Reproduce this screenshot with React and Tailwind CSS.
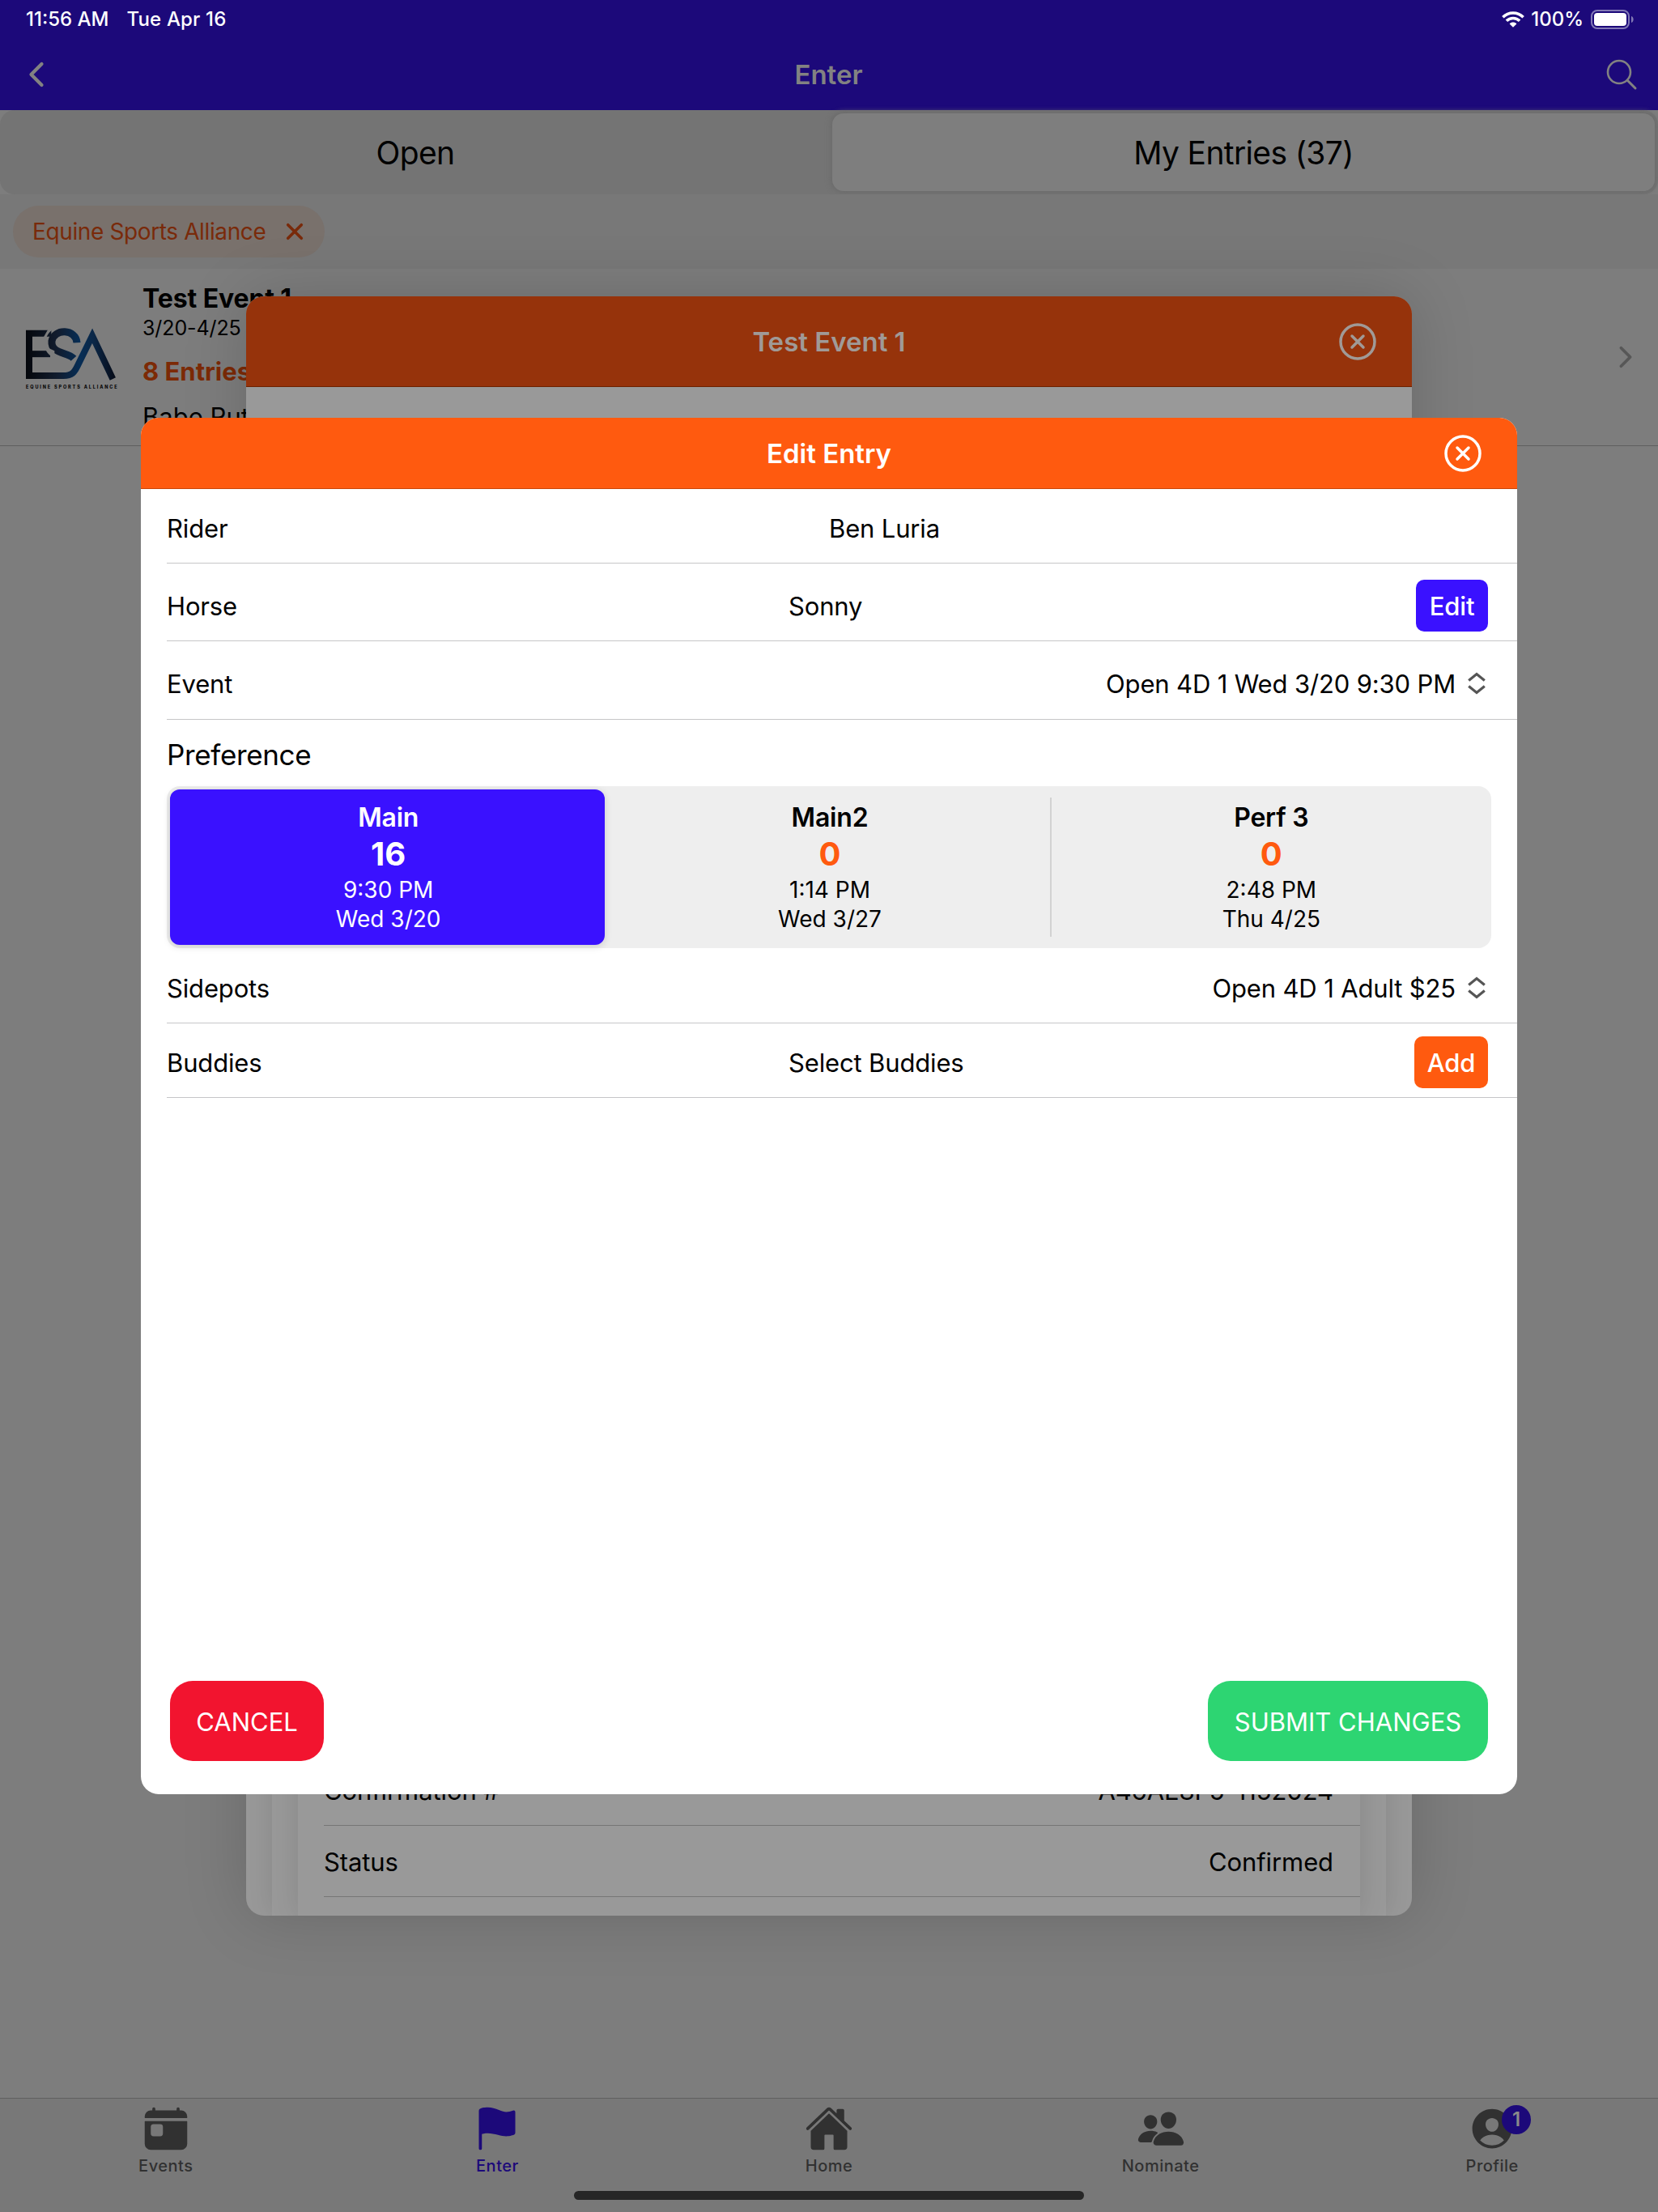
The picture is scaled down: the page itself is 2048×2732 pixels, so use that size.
import React from "react";
import {
  IoChevronBack,
  IoChevronForward,
  IoClose,
  IoCloseCircleOutline,
  IoFlag,
  IoHome,
  IoPeople,
  IoPersonCircle,
  IoToday,
} from "react-icons/io5";

const tabs = [
  { name: "Events", icon: IoToday },
  { name: "Enter", icon: IoFlag, active: true },
  { name: "Home", icon: IoHome },
  { name: "Nominate", icon: IoPeople },
  { name: "Profile", icon: IoPersonCircle, badge: 1 },
];

const performances = [
  { name: "Main", count: 16, time: "9:30 PM", date: "Wed 3/20", selected: true },
  { name: "Main2", count: 0, time: "1:14 PM", date: "Wed 3/27" },
  { name: "Perf 3", count: 0, time: "2:48 PM", date: "Thu 4/25", divider: true },
];

function StatusBar() {
  return (
    <div className="flex h-[48px] items-center justify-between pl-[32px] pr-[29px] text-[24px] font-medium leading-none text-white">
      <div className="flex gap-[22px]">
        <span>11:56 AM</span>
        <span className="tracking-[0.15px]">Tue Apr 16</span>
      </div>
      <div className="flex items-center">
        <svg width="28" height="20" viewBox="0 0 28 20" className="mr-[8px]">
          <g fill="none" stroke="white" strokeWidth="3.6">
            <path d="M1.4 7.2C8.4 0.2 19.6 0.2 26.6 7.2" />
            <path d="M5.9 11.8C10.4 7.4 17.6 7.4 22.1 11.8" />
          </g>
          <path d="M14 19.8L9.6 15.4C12 13 16 13 18.4 15.4Z" fill="white" />
        </svg>
        <span>100%</span>
        <svg width="54" height="24" viewBox="0 0 54 24" className="ml-[9px]">
          <rect x="1" y="1" width="46" height="22" rx="7" fill="none" stroke="#8279b5" strokeWidth="2" />
          <rect x="4" y="4" width="40" height="16" rx="4" fill="white" />
          <path d="M50 8C53.5 9 53.5 15 50 16Z" fill="#8279b5" />
        </svg>
      </div>
    </div>
  );
}

function Header() {
  return (
    <header className="h-[136px] bg-[#1c097a]">
      <StatusBar />
      <div className="flex h-[88px] items-center justify-between pl-[22px] pr-[25px] text-[#828282]">
        <IoChevronBack size={46} />
        <h1 className="-ml-[4px] text-[33px] font-semibold leading-none">Enter</h1>
        <svg width="40" height="40" viewBox="0 0 40 40" fill="none" stroke="currentColor" strokeLinecap="round">
          <circle cx="17" cy="17" r="14" strokeWidth="2.6" />
          <path d="M27.5 27.5L37 37" strokeWidth="3" />
        </svg>
      </div>
    </header>
  );
}

function Logo() {
  return (
    <svg width="150" height="120" viewBox="0 0 450 360">
      <defs>
        <linearGradient id="esa" gradientUnits="userSpaceOnUse" x1="66" y1="0" x2="400" y2="0">
          <stop offset="0" stopColor="#05070c" />
          <stop offset="0.35" stopColor="#111c2e" />
          <stop offset="0.6" stopColor="#062d55" />
          <stop offset="0.75" stopColor="#0b2747" />
          <stop offset="1" stopColor="#060a16" />
        </linearGradient>
      </defs>
      <g fill="none" stroke="url(#esa)" strokeWidth="24">
        <path d="M160 95H78V252H205C238 252 246 238 256 218L312 104L388 264" strokeMiterlimit="6" />
        <path d="M90 171.5H156" />
        <path d="M255 130C252 78 170 76 162 124C158 172 222 164 243 188" strokeWidth="27" />
      </g>
      <path d="M148 80L166 80C150 92 143 106 142 112L130 112Z" fill="#7d7d7d" />
      <path d="M140 158C148 172 158 180 172 186L172 160L150 150Z" fill="#7d7d7d" />
      <text
        x="66"
        y="301"
        textLength="338"
        fontFamily="Inter, sans-serif"
        fontSize="16.5"
        fontWeight="800"
        fill="#0a0a0a"
      >
        EQUINE SPORTS ALLIANCE
      </text>
    </svg>
  );
}

function EventsPage() {
  return (
    <main className="flex flex-1 flex-col bg-[#7d7d7d]">
      <div className="flex h-[104px] rounded-[18px] bg-[#747474] text-[39px] leading-none tracking-[-0.65px]">
        <div className="flex flex-1 items-center justify-center pr-[2px]">Open</div>
        <div className="my-[4px] mr-[4px] flex w-[1016px] items-center justify-center rounded-[14px] bg-[#7e7e7e] shadow-[0_0_6px_2px_#6b6b6b]">
          My Entries (37)
        </div>
      </div>

      <div className="flex h-[92px] items-center bg-[#787878] px-[16px]">
        <div className="flex h-[64px] w-[385px] items-center rounded-full bg-[#79716c] pl-[24px] leading-none text-[#792a0a]">
          <span className="text-[28px] tracking-[-0.38px]">Equine Sports Alliance</span>
          <IoClose size={38} className="ml-[17px]" />
        </div>
      </div>

      <div className="flex h-[219px] items-start border-b border-[#5f5f5f] pt-[16px]">
        <div className="pl-[10px] pt-[32px]">
          <Logo />
        </div>
        <div className="flex-1 pl-[16px] leading-none">
          <p className="pt-px text-[32px] font-bold leading-[40px] tracking-[-0.1px]">Test Event 1</p>
          <p className="text-[25px] leading-[33px] tracking-[-0.1px]">3/20-4/25</p>
          <p className="mt-[17px] text-[31px] font-bold leading-[40px] text-[#7c2a06]">8 Entries</p>
          <p className="mt-[16px] text-[31px] leading-[40px]">Babe Ruth</p>
        </div>
        <IoChevronForward size={40} className="mr-[20px] mt-[73px] text-[#575757]" />
      </div>
    </main>
  );
}

function TabBar() {
  return (
    <nav className="h-[141px] border-t border-[#606060] bg-[#787878]">
      <div className="flex">
        {tabs.map(({ name, icon: Icon, active, badge }) => (
          <div
            key={name}
            className={`flex flex-1 flex-col items-center pt-[7px] ${active ? "text-[#1c097a]" : "text-[#313131]"}`}
          >
            <div className="relative">
              <Icon size={60} />
              {badge && (
                <span className="absolute -right-[18px] top-[1px] flex h-[36px] w-[36px] items-center justify-center rounded-full bg-[#1c097a] text-[24px] font-semibold leading-none text-[#8a8a8a]">
                  {badge}
                </span>
              )}
            </div>
            <span className="mt-[4px] text-[20px] font-medium leading-[24px] tracking-[0.5px]">{name}</span>
          </div>
        ))}
      </div>
      <div className="mx-auto mt-[19px] h-[11px] w-[630px] rounded-full bg-[#262626]" />
    </nav>
  );
}

function DetailRow({ label, value }) {
  return (
    <div className="ml-[32px] flex h-[88px] items-center justify-between border-b border-[#767676] pr-[33px] pt-[2px]">
      <span>{label}</span>
      <span>{value}</span>
    </div>
  );
}

function EventModal() {
  return (
    <section className="absolute left-[304px] top-[366px] flex h-[2000px] w-[1440px] flex-col overflow-hidden rounded-[22px] bg-[#999999] shadow-[0_0_80px_rgba(0,0,0,0.16)]">
      <div className="relative flex h-[112px] items-center justify-center border-b border-[#6d2200] bg-[#96330b] text-[#a09a97]">
        <h2 className="pt-[2px] text-[33px] font-semibold leading-none">Test Event 1</h2>
        <IoCloseCircleOutline size={56} className="absolute right-[39px]" />
      </div>
      {/* stacked cards: only their edges and the last rows of the front one show */}
      <div className="flex flex-1 px-[32px] pt-[120px]">
        <div className="flex flex-1 px-[32px] shadow-[0_0_34px_rgba(0,0,0,0.12)]">
          <div className="flex flex-1 flex-col justify-end bg-[#999999] pb-[23px] text-[31px] leading-none tracking-[-0.1px] shadow-[0_0_34px_rgba(0,0,0,0.12)]">
            <DetailRow label="Confirmation #" value="A46AE8F5-1152024" />
            <DetailRow label="Status" value="Confirmed" />
          </div>
        </div>
      </div>
    </section>
  );
}

function UpDown() {
  return (
    <svg
      width="22"
      height="28"
      viewBox="0 0 22 28"
      fill="none"
      stroke="#555555"
      strokeWidth="3.2"
      className="mr-[3px]"
    >
      <path d="M1.2 10.6L11 2.6L20.8 10.6" />
      <path d="M1.2 17.4L11 25.4L20.8 17.4" />
    </svg>
  );
}

function Row({ label, className = "", children }) {
  return (
    <div className={`ml-[32px] flex items-center border-b border-[#c6c6c8] pr-[36px] ${className}`}>
      <span className="w-[768px] shrink-0">{label}</span>
      {children}
    </div>
  );
}

function EditEntryModal() {
  return (
    <section className="absolute left-[174px] top-[516px] flex h-[1700px] w-[1700px] flex-col overflow-hidden rounded-[22px] bg-white">
      <div className="relative flex h-[88px] items-center justify-center border-b border-[#c9470c] bg-[#ff5a0f] text-white">
        <h2 className="pt-px text-[33px] font-semibold leading-none">Edit Entry</h2>
        <IoCloseCircleOutline size={56} className="absolute right-[39px]" />
      </div>

      <div className="text-[31px] leading-none tracking-[-0.15px]">
        <Row label="Rider" className="h-[92px] pt-[6px]">
          <span className="ml-[50px]">Ben Luria</span>
        </Row>
        <Row label="Horse" className="h-[96px] pt-[9px]">
          <span>Sonny</span>
          <button className="ml-auto h-[64px] w-[89px] rounded-[10px] bg-[#3a11ff] font-medium text-white">Edit</button>
        </Row>
        <Row label="Event" className="h-[97px] pt-[8px]">
          <span className="ml-auto mr-[15px]">Open 4D 1 Wed 3/20 9:30 PM</span>
          <UpDown />
        </Row>

        <h3 className="ml-[32px] flex h-[82px] items-center pt-[4px] text-[35px] tracking-[-0.35px]">Preference</h3>
        <div className="mx-[32px] flex h-[200px] rounded-[16px] bg-[#eeeeee] py-[4px]">
          {performances.map((perf) => (
            <div key={perf.name} className="flex flex-1 items-center">
              {perf.divider && <div className="h-[172px] w-[2px] bg-[#d2d2d2]" />}
              <div
                className={`mx-[4px] flex h-full flex-1 flex-col items-center rounded-[12px] pt-[16px] tracking-normal ${
                  perf.selected ? "bg-[#3a11ff] text-white shadow-[0_2px_10px_rgba(0,0,0,0.15)]" : "text-black"
                } ${perf.divider ? "" : "pl-[2px]"}`}
              >
                <p className="text-[32px] font-semibold leading-[38px] tracking-[-0.2px]">{perf.name}</p>
                <p
                  className={`text-[40px] font-bold leading-[51px] ${perf.selected ? "text-white" : "text-[#ff5a0f]"}`}
                >
                  {perf.count}
                </p>
                <p className="pt-px text-[28px] leading-[36px]">{perf.time}</p>
                <p className="text-[28px] leading-[36px]">{perf.date}</p>
              </div>
            </div>
          ))}
        </div>

        <Row label="Sidepots" className="h-[93px] pt-[6px]">
          <span className="ml-auto mr-[15px]">Open 4D 1 Adult $25</span>
          <UpDown />
        </Row>
        <Row label="Buddies" className="h-[92px] pt-[5px]">
          <span>Select Buddies</span>
          <button className="ml-auto h-[64px] w-[91px] rounded-[10px] bg-[#ff5a0f] font-medium text-white">Add</button>
        </Row>
      </div>

      <div className="mb-[41px] mt-auto flex justify-between px-[36px] text-[31px] leading-none text-white">
        <button className="h-[99px] w-[190px] rounded-[28px] bg-[#f2142f] pt-[2px]">CANCEL</button>
        <button className="h-[99px] w-[346px] rounded-[28px] bg-[#2dd572] pt-[2px]">SUBMIT CHANGES</button>
      </div>
    </section>
  );
}

export default function App() {
  return (
    <div className="relative flex h-[2732px] w-[2048px] flex-col overflow-hidden font-['Inter',sans-serif] text-black">
      <Header />
      <EventsPage />
      <TabBar />
      <EventModal />
      <EditEntryModal />
    </div>
  );
}
